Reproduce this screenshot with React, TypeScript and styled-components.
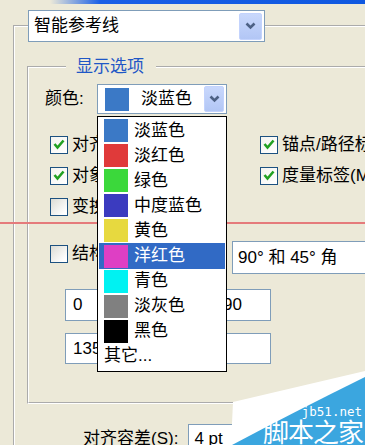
import React from 'react'
import styled, { createGlobalStyle } from 'styled-components'

const GlobalStyle = createGlobalStyle`
  html, body {
    margin: 0;
    padding: 0;
    background: #ece9d8;
  }
  body {
    font-family: "Noto Sans CJK SC", "Liberation Sans", sans-serif;
    color: #000;
  }
`

const FONT = `"Liberation Sans", "Noto Sans CJK SC", sans-serif`

const Page = styled.div`
  position: relative;
  width: 365px;
  height: 445px;
  overflow: hidden;
  background: #ece9d8;
  font-family: ${FONT};
  font-size: 17px;
`

const TitleEdge = styled.div`
  height: 4px;
  background: linear-gradient(to right, rgba(20, 90, 230, 0) 0, rgba(20, 90, 230, 0) 50px, #1a5fe6 100px, #0f58e0 100%);
`

const Group = styled.fieldset<{ $ml: number; $mt: number }>`
  margin: ${p => p.$mt}px 0 0 ${p => p.$ml}px;
  padding: 0;
  min-width: 0;
  border: none;
  border-top: 2px groove #fff;
  border-left: 2px groove #fff;
`

const InnerGroup = styled(Group)`
  border-bottom: 2px groove #fff;
  width: 360px;
  padding: 7px 0 38px 16px;
`

const OuterLegend = styled.legend`
  margin-left: 13px;
  padding: 0;
`

const InnerLegend = styled.legend`
  margin-left: 21px;
  padding: 0 12px 0 10px;
  line-height: 20px;
  color: #1f57c6;
  font-size: 17px;
`

const Combo = styled.div<{ $w: number; $h: number }>`
  position: relative;
  box-sizing: border-box;
  width: ${p => p.$w}px;
  height: ${p => p.$h}px;
  border: 1px solid #7f9db9;
  background: #fff;
  display: flex;
  align-items: center;
  padding-left: 5px;
  line-height: 20px;
  white-space: nowrap;
`

const ComboText = styled.span`
  flex: 1;
`

const DropButton = styled.div<{ $w: number; $h: number }>`
  box-sizing: border-box;
  width: ${p => p.$w}px;
  height: ${p => p.$h}px;
  margin-right: 2px;
  border: 1px solid #c3d3fd;
  border-radius: 2px;
  background: linear-gradient(to bottom, #c9d8fc, #b2c6f5);
  display: flex;
  align-items: center;
  justify-content: center;
`

const Chevron = () => (
  <svg width="11" height="8" viewBox="0 0 11 8">
    <polyline points="1.5,1.5 5.5,5.5 9.5,1.5" fill="none" stroke="#4d6185" strokeWidth="2.6" />
  </svg>
)

const ColorRow = styled.div`
  display: flex;
  align-items: center;
  gap: 5px;
  line-height: 20px;
`

const Label = styled.span<{ $w?: number }>`
  width: ${p => (p.$w ? `${p.$w}px` : 'auto')};
  white-space: nowrap;
`

const Swatch = styled.span<{ $c: string }>`
  flex: none;
  width: 24px;
  height: 23px;
  background: ${p => p.$c};
`

const ColorField = styled.div`
  position: relative;
`

const ColorCombo = styled(Combo)`
  padding-left: 7px;
  gap: 12px;
`

const List = styled.div`
  position: absolute;
  z-index: 3;
  top: calc(100% + 2px);
  left: 0;
  box-sizing: border-box;
  width: 130px;
  border: 1px solid #000;
  background: #fff;
  padding: 1px 1px 2px;
`

const Item = styled.div<{ $active?: boolean }>`
  display: flex;
  align-items: center;
  gap: 6px;
  height: 25.1px;
  padding-left: 5px;
  line-height: 20px;
  white-space: nowrap;
  background: ${p => (p.$active ? '#316ac5' : 'transparent')};
  color: ${p => (p.$active ? '#fff' : '#000')};
`

const CheckGrid = styled.div`
  display: grid;
  grid-template-columns: 210px 1fr;
  grid-auto-rows: 31px;
  margin: 15px 0 0 5px;
  white-space: nowrap;
`

const CheckItem = styled.label`
  display: flex;
  align-items: center;
  gap: 4px;
  line-height: 20px;
  overflow: hidden;
`

const Box = styled.span<{ $on?: boolean }>`
  flex: none;
  box-sizing: border-box;
  width: 18px;
  height: 18px;
  border: 1px solid #1c5180;
  background: ${p => (p.$on ? 'linear-gradient(135deg, #f4f4f0, #fff)' : 'linear-gradient(135deg, #dcdcd4, #fff 85%)')};
  display: flex;
  align-items: center;
  justify-content: center;
`

const Tick = () => (
  <svg width="12" height="11" viewBox="0 0 12 11">
    <polyline points="1.5,5 4.5,8.5 10.5,1.5" fill="none" stroke="#21a121" strokeWidth="2.6" />
  </svg>
)

const Check = ({ on, text }: { on?: boolean; text: string }) => (
  <CheckItem>
    <Box $on={on}>{on && <Tick />}</Box>
    <span>{text}</span>
  </CheckItem>
)

const GuideRow = styled.div`
  display: flex;
  align-items: flex-start;
  margin: 19px 0 0 5px;
  white-space: nowrap;
  ${CheckItem} {
    width: 182px;
    margin-top: 3px;
  }
`

const AngleGrid = styled.div`
  display: grid;
  grid-template-columns: repeat(3, 56px);
  grid-template-rows: 32px 31px;
  column-gap: 19px;
  row-gap: 12px;
  margin: 15px 0 0 20px;
`

const Field = styled.div`
  box-sizing: border-box;
  border: 1px solid #7f9db9;
  background: #fff;
  padding-left: 7px;
  display: flex;
  align-items: center;
  white-space: nowrap;
  overflow: hidden;
`

const ToleranceRow = styled.div`
  display: flex;
  align-items: center;
  gap: 10px;
  margin: 20px 0 0 68px;
  line-height: 20px;
`

const ToleranceField = styled(Field)`
  width: 120px;
  height: 30px;
  padding-left: 5px;
`

const GuideLine = styled.div`
  position: absolute;
  z-index: 2;
  left: 0;
  right: 0;
  top: 222px;
  height: 2px;
  background: #e57b7b;
`

const Watermark = styled.div`
  position: absolute;
  z-index: 4;
  right: 0;
  bottom: 0;
  width: 137px;
  height: 77px;
  svg {
    position: absolute;
    inset: 0;
  }
`

const MarkText = styled.div`
  position: absolute;
  right: 2px;
  bottom: 1px;
  text-align: right;
  color: #fff;
  line-height: 1;
`

const MarkUrl = styled.div`
  font-family: "DejaVu Sans Mono", monospace;
  font-size: 12.5px;
  margin-bottom: 0;
  padding-right: 1px;
`

const MarkName = styled.div`
  font-family: "Noto Sans CJK SC", sans-serif;
  font-size: 26px;
  letter-spacing: -1px;
`

const colors = [
  { name: '淡蓝色', c: '#3b79c6' },
  { name: '淡红色', c: '#e03a3a' },
  { name: '绿色', c: '#3bd83b' },
  { name: '中度蓝色', c: '#3b3bbf' },
  { name: '黄色', c: '#e7d93f' },
  { name: '洋红色', c: '#de3fc4' },
  { name: '青色', c: '#00f2f2' },
  { name: '淡灰色', c: '#808080' },
  { name: '黑色', c: '#000000' },
]

const App: React.FC = () => {
  return (
    <>
      <GlobalStyle />
      <Page>
        <TitleEdge />
        <Group $ml={13} $mt={6}>
          <OuterLegend>
            <Combo $w={237} $h={32}>
              <ComboText>智能参考线</ComboText>
              <DropButton $w={23} $h={27}><Chevron /></DropButton>
            </Combo>
          </OuterLegend>

          <InnerGroup $ml={12} $mt={15}>
            <InnerLegend>显示选项</InnerLegend>
            <ColorRow>
              <Label $w={47}>颜色:</Label>
              <ColorField>
                <ColorCombo $w={130} $h={30}>
                  <Swatch $c="#3b79c6" />
                  <ComboText>淡蓝色</ComboText>
                  <DropButton $w={22} $h={26}><Chevron /></DropButton>
                </ColorCombo>
                <List>
                  {colors.map(item => (
                    <Item key={item.name} $active={item.name === '洋红色'}>
                      <Swatch $c={item.c} />
                      <span>{item.name}</span>
                    </Item>
                  ))}
                  <Item>其它...</Item>
                </List>
              </ColorField>
            </ColorRow>

            <CheckGrid>
              <Check on text="对齐参考线(A)" />
              <Check on text="锚点/路径标签(L)" />
              <Check on text="对象突出显示(H)" />
              <Check on text="度量标签(M)" />
              <Check text="变换工具(T)" />
            </CheckGrid>

            <GuideRow>
              <Check text="结构参考线(C):" />
              <Combo $w={170} $h={33}>
                <ComboText>90° 和 45° 角</ComboText>
              </Combo>
            </GuideRow>

            <AngleGrid>
              <Field>0</Field>
              <Field>45</Field>
              <Field>90</Field>
              <Field>135</Field>
              <Field />
              <Field />
            </AngleGrid>
          </InnerGroup>

          <ToleranceRow>
            <Label>对齐容差(S):</Label>
            <ToleranceField>4 pt</ToleranceField>
          </ToleranceRow>
        </Group>

        <GuideLine />

        <Watermark>
          <svg width="137" height="77" viewBox="0 0 137 77">
            <polygon points="5,34 137,3 137,77 3,77" fill="#ffffff" />
            <path d="M4 77 Q66 44 137 9 L137 77 Z" fill="#3ba6df" />
          </svg>
          <MarkText>
            <MarkUrl>jb51.net</MarkUrl>
            <MarkName>脚本之家</MarkName>
          </MarkText>
        </Watermark>
      </Page>
    </>
  )
}

export default App
